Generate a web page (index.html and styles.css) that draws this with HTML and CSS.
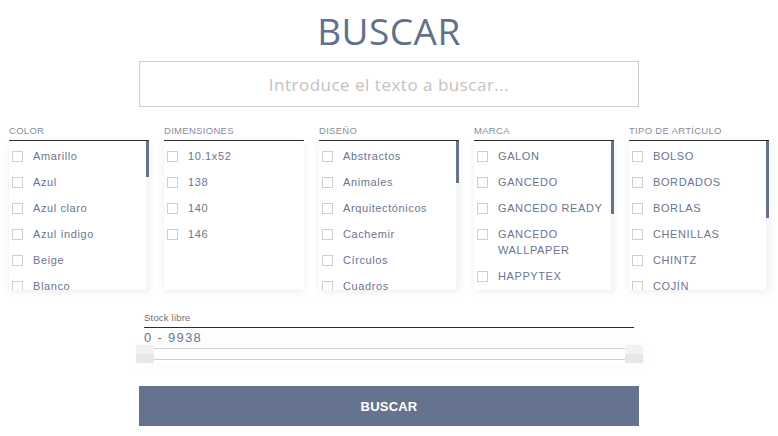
FILE: index.html
```html
<!DOCTYPE html>
<html lang="es">
<head>
<meta charset="utf-8">
<title>Buscar</title>
<link rel="stylesheet" href="styles.css">
</head>
<body>
<main class="page">
  <h1 class="title">BUSCAR</h1>
  <div class="search">
    <input class="search-input" type="text" placeholder="Introduce el texto a buscar...">
  </div>

  <div class="filters">
    <section class="filter">
      <h2 class="filter-title">COLOR</h2>
      <div class="filter-box">
        <ul class="filter-list">
          <li class="option"><span class="check"></span><span class="option-label">Amarillo</span></li>
          <li class="option"><span class="check"></span><span class="option-label">Azul</span></li>
          <li class="option"><span class="check"></span><span class="option-label">Azul claro</span></li>
          <li class="option"><span class="check"></span><span class="option-label">Azul índigo</span></li>
          <li class="option"><span class="check"></span><span class="option-label">Beige</span></li>
          <li class="option"><span class="check"></span><span class="option-label">Blanco</span></li>
        </ul>
        <div class="scroll-track"><div class="scroll-thumb" style="height:36px"></div></div>
      </div>
    </section>

    <section class="filter">
      <h2 class="filter-title">DIMENSIONES</h2>
      <div class="filter-box">
        <ul class="filter-list">
          <li class="option"><span class="check"></span><span class="option-label">10.1x52</span></li>
          <li class="option"><span class="check"></span><span class="option-label">138</span></li>
          <li class="option"><span class="check"></span><span class="option-label">140</span></li>
          <li class="option"><span class="check"></span><span class="option-label">146</span></li>
        </ul>
      </div>
    </section>

    <section class="filter">
      <h2 class="filter-title">DISEÑO</h2>
      <div class="filter-box">
        <ul class="filter-list">
          <li class="option"><span class="check"></span><span class="option-label">Abstractos</span></li>
          <li class="option"><span class="check"></span><span class="option-label">Animales</span></li>
          <li class="option"><span class="check"></span><span class="option-label">Arquitectónicos</span></li>
          <li class="option"><span class="check"></span><span class="option-label">Cachemir</span></li>
          <li class="option"><span class="check"></span><span class="option-label">Círculos</span></li>
          <li class="option"><span class="check"></span><span class="option-label">Cuadros</span></li>
        </ul>
        <div class="scroll-track"><div class="scroll-thumb" style="height:42px"></div></div>
      </div>
    </section>

    <section class="filter">
      <h2 class="filter-title">MARCA</h2>
      <div class="filter-box">
        <ul class="filter-list">
          <li class="option"><span class="check"></span><span class="option-label">GALON</span></li>
          <li class="option"><span class="check"></span><span class="option-label">GANCEDO</span></li>
          <li class="option"><span class="check"></span><span class="option-label">GANCEDO READY</span></li>
          <li class="option"><span class="check"></span><span class="option-label">GANCEDO WALLPAPER</span></li>
          <li class="option"><span class="check"></span><span class="option-label">HAPPYTEX</span></li>
        </ul>
        <div class="scroll-track"><div class="scroll-thumb" style="height:73px"></div></div>
      </div>
    </section>

    <section class="filter">
      <h2 class="filter-title">TIPO DE ARTÍCULO</h2>
      <div class="filter-box">
        <ul class="filter-list">
          <li class="option"><span class="check"></span><span class="option-label">BOLSO</span></li>
          <li class="option"><span class="check"></span><span class="option-label">BORDADOS</span></li>
          <li class="option"><span class="check"></span><span class="option-label">BORLAS</span></li>
          <li class="option"><span class="check"></span><span class="option-label">CHENILLAS</span></li>
          <li class="option"><span class="check"></span><span class="option-label">CHINTZ</span></li>
          <li class="option"><span class="check"></span><span class="option-label">COJÍN</span></li>
        </ul>
        <div class="scroll-track"><div class="scroll-thumb" style="height:77px"></div></div>
      </div>
    </section>
  </div>

  <div class="stock">
    <div class="stock-label">Stock libre</div>
    <div class="stock-value">0 - 9938</div>
  </div>
  <div class="slider">
    <span class="handle"></span>
    <span class="track"></span>
    <span class="handle"></span>
  </div>

  <div class="actions">
    <button class="submit" type="button">BUSCAR</button>
  </div>
</main>
</body>
</html>
```

FILE: styles.css
```css
* { box-sizing: border-box; }

html, body {
  margin: 0;
  padding: 0;
  background: #ffffff;
}

body {
  font-family: "Open Sans", "Liberation Sans", sans-serif;
  color: #66738f;
}

.page {
  width: 778px;
  padding-top: 8px;
}

.title {
  margin: 0;
  text-align: center;
  font-family: "Open Sans", sans-serif;
  font-weight: 400;
  font-size: 37px;
  line-height: 46px;
  letter-spacing: 0.5px;
  color: #62708e;
}

.search {
  display: flex;
  justify-content: center;
  margin-top: 7px;
}

.search-input {
  width: 500px;
  height: 46px;
  border: 1px solid #cccccc;
  outline: none;
  text-align: center;
  font-family: "Open Sans", sans-serif;
  font-size: 17px;
  letter-spacing: 0.5px;
  color: #555;
  padding: 0 10px;
}

.search-input::placeholder {
  color: #c2c2c2;
}

.filters {
  display: grid;
  grid-template-columns: repeat(5, 140px);
  column-gap: 15px;
  padding: 0 0 0 9px;
  margin-top: 18px;
}

.filter-title {
  margin: 0;
  font-family: "Liberation Sans", sans-serif;
  font-weight: 400;
  font-size: 9.5px;
  line-height: 12px;
  letter-spacing: 0.3px;
  color: #858da0;
  padding-bottom: 3px;
  border-bottom: 1px solid #2e2e2e;
}

.filter-box {
  position: relative;
  height: 149px;
  overflow: hidden;
  background: #fff;
  box-shadow: 0 2px 8px rgba(0, 0, 0, 0.07);
}

.filter-list {
  list-style: none;
  margin: 0;
  padding: 2px 6px 0 0;
}

.scroll-track {
  position: absolute;
  top: 0;
  right: 0;
  bottom: 0;
  width: 3px;
  background: #f6f6f6;
}

.scroll-thumb {
  width: 100%;
  background: #66738f;
}

.option {
  display: flex;
  align-items: flex-start;
  padding: 5px 0 5px 3px;
  font-family: "Liberation Sans", sans-serif;
  font-size: 11px;
  line-height: 16px;
  letter-spacing: 0.6px;
  color: #6a7591;
}

.check {
  flex: none;
  width: 11px;
  height: 11px;
  border: 1px solid #cfcfcf;
  margin-top: 3px;
  margin-right: 10px;
}

.option-label {
  flex: 1;
}

.stock {
  width: 490px;
  margin: 22px auto 0;
}

.stock-label {
  font-family: "Liberation Sans", sans-serif;
  font-size: 9.5px;
  line-height: 12px;
  letter-spacing: 0.2px;
  color: #6f6f6f;
  padding-bottom: 3px;
  border-bottom: 1px solid #2e2e2e;
}

.stock-value {
  font-family: "Liberation Sans", sans-serif;
  font-size: 13px;
  line-height: 14px;
  letter-spacing: 1.3px;
  color: #6a7591;
  padding-top: 3px;
}

.slider {
  display: flex;
  align-items: center;
  width: 507px;
  height: 18px;
  margin: 0 auto;
  box-shadow: 0 0 18px rgba(0, 0, 0, 0.03);
}

.handle {
  flex: none;
  width: 18px;
  height: 18px;
  background: linear-gradient(#f1f1f1 50%, #e7e7e7 50%);
}

.track {
  flex: 1;
  height: 12px;
  border-top: 1px solid #cfcfcf;
  border-bottom: 1px solid #cfcfcf;
  background: #fff;
}

.actions {
  display: flex;
  justify-content: center;
  margin-top: 23px;
}

.submit {
  width: 500px;
  height: 40px;
  border: none;
  background: #66738f;
  color: #ffffff;
  font-family: "Liberation Sans", sans-serif;
  font-weight: 700;
  font-size: 13px;
  letter-spacing: 0.2px;
  cursor: pointer;
}
```
